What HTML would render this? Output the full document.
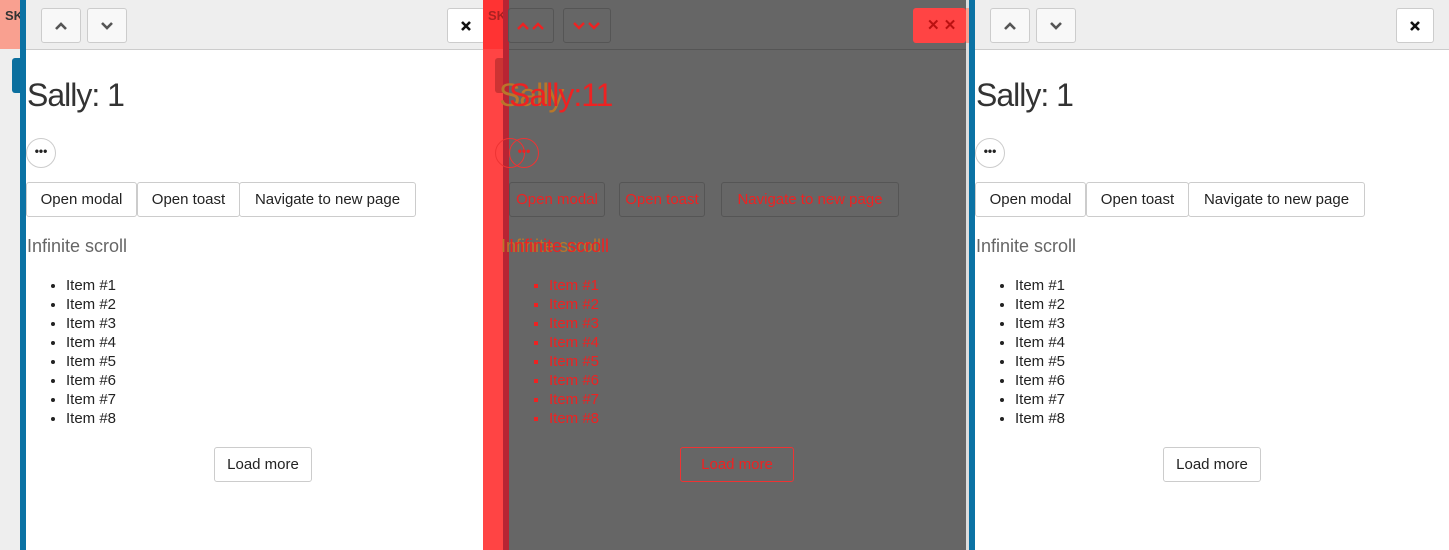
<!DOCTYPE html>
<html><head><style>
*{box-sizing:border-box;margin:0;padding:0}
body{width:1449px;height:550px;overflow:hidden;position:relative;font-family:"Liberation Sans",sans-serif;background:#fff}
.abs{position:absolute}
.panel{position:absolute;top:0;width:474px;height:550px;background:#fff;color:#222}
.hdr{position:absolute;left:0;top:0;width:474px;height:50px;background:#eee;border-bottom:1px solid #ccc}
.btn{position:absolute;border:1px solid #ccc;border-radius:3px;background:#f8f8f8;display:flex;align-items:center;justify-content:center;font-size:15px;color:#222}
.wbtn{position:absolute;border:1px solid #ccc;border-radius:3px;background:#fff;display:flex;align-items:center;justify-content:center;font-size:15px;color:#222;height:35px;top:182px}
h1{position:absolute;left:1px;top:77px;font-weight:normal;font-size:32px;letter-spacing:-1px;color:#333}
.dots{position:absolute;left:0;top:138px;width:30px;height:30px;border:1px solid #ccc;border-radius:50%;font-size:12px;font-weight:bold;text-align:center;line-height:24px}
h2{position:absolute;left:1px;top:236px;font-weight:normal;font-size:18px;color:#666}
ul{position:absolute;left:40px;top:276px;font-size:15px;line-height:19px;list-style:disc}
.mid .btn,.mid .wbtn{background:transparent;border-color:#e33;color:#e22}
</style></head><body>
<div class="abs" style="left:0;top:0;width:20px;height:49px;background:#f9a090;font-size:13px;font-weight:bold;color:#333;padding:8px 0 0 5px;overflow:hidden">SK</div>
<div class="abs" style="left:0;top:49px;width:20px;height:501px;background:#eee"></div>
<div class="abs" style="left:12px;top:58px;width:8px;height:35px;background:#0b6f9e;border-radius:3px 0 0 3px"></div>
<div class="abs" style="left:20px;top:0;width:6px;height:550px;background:#0b72a4"></div>
<div class="panel" style="left:26px">
 <div class="hdr"></div>
 <div class="btn" style="left:15px;top:8px;width:40px;height:35px"><svg width="14" height="10" viewBox="0 0 14 10"><path d="M2 8L7 3L12 8" stroke="#555" stroke-width="2.6" fill="none"/></svg></div>
 <div class="btn" style="left:61px;top:8px;width:40px;height:35px"><svg width="14" height="10" viewBox="0 0 14 10"><path d="M2 2L7 7L12 2" stroke="#555" stroke-width="2.6" fill="none"/></svg></div>
 <div class="btn" style="left:421px;top:8px;width:38px;height:35px;background:#fff"><svg width="12" height="12" viewBox="0 0 12 12"><path d="M2 2L10 10M10 2L2 10" stroke="#111" stroke-width="2.6"/></svg></div>
 <h1>Sally: 1</h1>
 <div class="dots">•••</div>
 <div class="wbtn" style="left:0;width:111px">Open modal</div>
 <div class="wbtn" style="left:111px;width:103px">Open toast</div>
 <div class="wbtn" style="left:213px;width:177px">Navigate to new page</div>
 <h2>Infinite scroll</h2>
 <ul><li>Item #1</li><li>Item #2</li><li>Item #3</li><li>Item #4</li><li>Item #5</li><li>Item #6</li><li>Item #7</li><li>Item #8</li></ul>
 <div class="wbtn" style="left:188px;top:447px;width:98px">Load more</div>
</div>
<div class="abs mid" style="left:483px;top:0;width:483px;height:550px;background:#666;overflow:hidden">
 <div class="abs" style="left:0;top:49px;width:483px;height:1px;background:#555"></div>
 <div class="abs" style="left:0;top:0;width:20px;height:550px;background:#f44"></div>
 <div class="abs" style="left:0;top:0;width:20px;height:49px;background:#f33;font-size:13px;font-weight:bold;color:#a22;padding:8px 0 0 5px">SK</div>
 <div class="abs" style="left:20px;top:0;width:6px;height:550px;background:#b82433"></div>
 <div class="abs" style="left:12px;top:58px;width:8px;height:35px;background:#c33;border-radius:3px 0 0 3px"></div>
 <div class="btn" style="left:25px;top:8px;width:46px;height:35px;border-color:#555"><svg width="30" height="10" viewBox="0 0 30 10"><path d="M2 8L7 3L12 8M17 8L22 3L27 8" stroke="#e22" stroke-width="2.4" fill="none"/></svg></div>
 <div class="btn" style="left:80px;top:8px;width:48px;height:35px;border-color:#555"><svg width="30" height="10" viewBox="0 0 30 10"><path d="M2 2L7 7L12 2M17 2L22 7L27 2" stroke="#e22" stroke-width="2.4" fill="none"/></svg></div>
 <div class="abs" style="left:430px;top:8px;width:53px;height:35px;background:#f44;border-radius:3px;color:#b11;font-weight:bold;font-size:15px;padding:8px 0 0 14px">✕ ✕</div>
 <div class="panel" style="left:26px;background:transparent;color:#e22">
  <h1 style="left:-10px;color:#b8762a">Sally</h1><h1 style="left:0;color:#e22">Sally:11</h1>
  <div class="dots" style="left:-14px;border-color:#e33;color:#e22"></div>
  <div class="dots" style="left:0;border-color:#e33;color:#e22">•••</div>
  <div class="wbtn" style="left:0;width:96px;border-color:#555">Open modal</div>
  <div class="wbtn" style="left:110px;width:86px;border-color:#555">Open toast</div>
  <div class="wbtn" style="left:212px;width:178px;border-color:#555">Navigate to new page</div>
  <h2 style="left:-8px;color:#b8762a">Infinite scroll</h2><h2 style="color:#e22;left:0">Infinite scroll</h2>
  <ul style="list-style:square;color:#e22;left:40px"><li>Item #1</li><li>Item #2</li><li>Item #3</li><li>Item #4</li><li>Item #5</li><li>Item #6</li><li>Item #7</li><li>Item #8</li></ul>
  <div class="wbtn" style="left:171px;top:447px;width:114px">Load more</div>
 </div>
</div>
<div class="abs" style="left:966px;top:0;width:3px;height:550px;background:#ddd"></div>
<div class="abs" style="left:966px;top:8px;width:3px;height:35px;background:#f9a090"></div>
<div class="abs" style="left:969px;top:0;width:6px;height:550px;background:#0b72a4"></div>
<div class="panel" style="left:975px">
 <div class="hdr"></div>
 <div class="btn" style="left:15px;top:8px;width:40px;height:35px"><svg width="14" height="10" viewBox="0 0 14 10"><path d="M2 8L7 3L12 8" stroke="#555" stroke-width="2.6" fill="none"/></svg></div>
 <div class="btn" style="left:61px;top:8px;width:40px;height:35px"><svg width="14" height="10" viewBox="0 0 14 10"><path d="M2 2L7 7L12 2" stroke="#555" stroke-width="2.6" fill="none"/></svg></div>
 <div class="btn" style="left:421px;top:8px;width:38px;height:35px;background:#fff"><svg width="12" height="12" viewBox="0 0 12 12"><path d="M2 2L10 10M10 2L2 10" stroke="#111" stroke-width="2.6"/></svg></div>
 <h1>Sally: 1</h1>
 <div class="dots">•••</div>
 <div class="wbtn" style="left:0;width:111px">Open modal</div>
 <div class="wbtn" style="left:111px;width:103px">Open toast</div>
 <div class="wbtn" style="left:213px;width:177px">Navigate to new page</div>
 <h2>Infinite scroll</h2>
 <ul><li>Item #1</li><li>Item #2</li><li>Item #3</li><li>Item #4</li><li>Item #5</li><li>Item #6</li><li>Item #7</li><li>Item #8</li></ul>
 <div class="wbtn" style="left:188px;top:447px;width:98px">Load more</div>
</div>
</body></html>
